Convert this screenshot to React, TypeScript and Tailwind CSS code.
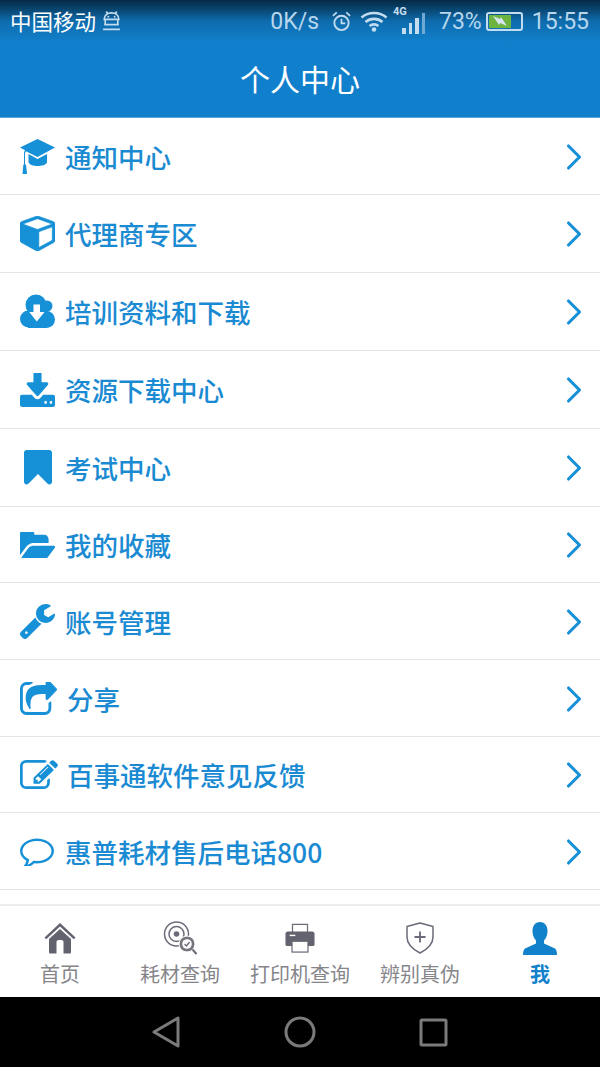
import React from 'react';
import { ChevronRight } from 'lucide-react';

const cjk = { fontFamily: '"Noto Sans CJK SC", sans-serif' };

// font-awesome 4 glyph outlines
const paths = {
  cube: 'M896 1629l640-349v-636l-640 233v752zm-64-864l698-254-698-254-698 254zm832-252v768q0 35-18 65t-50 47l-704 384q-28 16-61 16t-61-16l-704-384q-32-17-50-47t-18-65v-768q0-40 23-73t61-49l704-256q22-8 44-8t44 8l704 256q38 16 61 49t23 73z',
  download: 'M1344 1344q0-26-19-45t-45-19-45 19-19 45 19 45 45 19 45-19 19-45zm256 0q0-26-19-45t-45-19-45 19-19 45 19 45 45 19 45-19 19-45zm128-224v320q0 40-28 68t-68 28h-1472q-40 0-68-28t-28-68v-320q0-40 28-68t68-28h465l135 136q58 56 136 56t136-56l136-136h464q40 0 68 28t28 68zm-325-569q17 41-14 70l-448 448q-18 19-45 19t-45-19l-448-448q-31-29-14-70 17-39 59-39h256v-448q0-26 19-45t45-19h256q26 0 45 19t19 45v448h256q42 0 59 39z',
  bookmark: 'M1420 128q23 0 44 9 33 13 52.500 41t19.500 62v1289q0 34-19.500 62t-52.500 41q-19 8-44 8-48 0-83-32l-441-424-441 424q-36 33-83 33-23 0-44-9-33-13-52.500-41t-19.500-62v-1289q0-34 19.500-62t52.500-41q21-9 44-9h1048z',
  folder: 'M1879 952q0 31-31 66l-336 396q-43 51-120.500 86.500t-143.500 35.500h-1088q-34 0-60.500-13t-26.500-43q0-31 31-66l336-396q43-51 120.500-86.500t143.500-35.500h1088q34 0 60.500 13t26.500 43zm-343-344v160h-832q-94 0-197 47.500t-164 119.500l-337 396-5 6q0-4-.5-12.500t-.5-12.500v-960q0-92 66-158t158-66h320q92 0 158 66t66 158v32h544q92 0 158 66t66 158z',
  wrench: 'M448 1472q0-26-19-45t-45-19-45 19-19 45 19 45 45 19 45-19 19-45zm644-420l-682 682q-37 37-90 37-52 0-91-37l-106-108q-38-36-38-90 0-53 38-91l681-681q39 98 114.500 173.500t173.500 114.500zm634-435q0 39-23 106-47 134-164.500 217.500t-258.500 83.500q-185 0-316.500-131.500t-131.500-316.500 131.500-316.500 316.500-131.500q58 0 121.500 16.500t107.500 46.500q16 11 16 28t-16 28l-293 169v224l193 106q5-3 79-48.500t135.500-81 70.500-35.500q15 0 23.500 10t8.500 25z',
  share: 'M1472 989v259q0 119-84.500 203.500t-203.500 84.500h-832q-119 0-203.500-84.500t-84.500-203.500v-832q0-119 84.500-203.500t203.500-84.500h255q13 0 22.500 9.500t9.500 22.500q0 27-26 32-77 26-133 60-10 4-16 4h-112q-66 0-113 47t-47 113v832q0 66 47 113t113 47h832q66 0 113-47t47-113v-214q0-19 18-29 28-13 54-37 16-16 35-8 21 9 21 29zm237-496l-384 384q-18 19-45 19-12 0-25-5-39-17-39-59v-192h-160q-323 0-438 131-119 137-74 473 3 23-20 34-8 2-12 2-16 0-26-13-10-14-21-31t-39.500-68.500-49.500-99.500-38.500-114-17.500-122q0-49 3.500-91t14-90 28-88 47-81.500 68.500-74 94.500-61.500 124.500-48.500 159.500-30.500 196.500-11h160v-192q0-42 39-59 13-5 25-5 26 0 45 19l384 384q19 19 19 45t-19 45z',
  edit: 'M888 1184l116-116-152-152-116 116v56h96v96h56zm440-720q-16-16-33 1l-350 350q-17 17-1 33t33-1l350-350q17-17 1-33zm80 594v190q0 119-84.500 203.500t-203.500 84.500h-832q-119 0-203.500-84.500t-84.500-203.500v-832q0-119 84.500-203.500t203.500-84.500h832q63 0 117 25 15 7 18 23 3 17-9 29l-49 49q-14 14-32 8-23-6-45-6h-832q-66 0-113 47t-47 113v832q0 66 47 113t113 47h832q66 0 113-47t47-113v-126q0-13 9-22l64-64q15-15 35-7t20 29zm-96-738l288 288-672 672h-288v-288zm444 132l-92 92-288-288 92-92q28-28 68-28t68 28l152 152q28 28 28 68t-28 68z',
  comment: 'M896 384q-204 0-381.500 69.500t-282 187.500-104.500 255q0 112 71.500 213.500t201.500 175.500l87 50-27 96q-24 91-70 172 152-63 275-171l43-38 57 6q69 8 130 8 204 0 381.500-69.500t282-187.500 104.500-255-104.500-255-282-187.500-381.500-69.500zm896 512q0 174-120 321.500t-326 233-450 85.500q-70 0-145-8-198 175-460 242-49 14-114 22h-5q-15 0-27-10.500t-16-27.500v-1q-3-4-.5-12t2-10 4.500-9.500l6-9 7-8.500 8-9q7-8 31-34.500t34.500-38 31-39.500 32.500-51 27-59 26-76q-157-89-247.500-220t-90.500-281q0-174 120-321.500t326-233 450-85.500 450 85.500 326 233 120 321.500z',
};

function Glyph({ d, box, className, bold }: { d: string; box: string; className: string; bold?: boolean }) {
  return (
    <svg viewBox={box} className={`shrink-0 ${className}`} fill="currentColor" preserveAspectRatio="none">
      <path d={d} stroke={bold ? 'currentColor' : 'none'} strokeWidth={bold ? 30 : 0} />
    </svg>
  );
}

function Cap() {
  return (
    <svg viewBox="0 0 35 35" className="w-[35px] h-[35px] shrink-0" fill="currentColor">
      <path d="M17.500 0L35 8.500L17.500 18L6 12.300C5.300 13 5 14 5 15V25C5.800 25.500 6.200 26.200 6.200 27L7 35H2.500L3.200 27C3.200 26.200 3.500 25.500 4 25V14.500C4 13.300 4.300 12 5 11.300L0 8.500Z" />
      <path d="M8.500 15L17.500 20L27 15V23.500C25 28 11 28.500 8.500 23.500Z" />
    </svg>
  );
}

function Cloud() {
  return (
    <svg viewBox="0 0 35 35" className="w-[35px] h-[35px] shrink-0">
      <g fill="currentColor">
        <circle cx="16" cy="11" r="10.500" />
        <circle cx="27" cy="12" r="5.500" />
        <circle cx="8.500" cy="25" r="8.500" />
        <circle cx="26.500" cy="25.500" r="8.500" />
        <rect x="8" y="15" width="19" height="19" />
      </g>
      <path d="M13.500 10.500H20V18H24.500L16.800 27.500L9.200 18H13.500Z" fill="#fff" />
    </svg>
  );
}

const rows = [
  { label: '通知中心', h: 'h-[77px]', icon: <Cap />, gap: 'ml-[10px]' },
  { label: '代理商专区', h: 'h-[78px]', icon: <Glyph d={paths.cube} box="0 127 1664 1666" className="w-[35px] h-[35px]" bold />, gap: 'ml-[10px]' },
  { label: '培训资料和下载', h: 'h-[78px]', icon: <Cloud />, gap: 'ml-[10px]' },
  { label: '资源下载中心', h: 'h-[78px]', icon: <Glyph d={paths.download} box="64 128 1664 1408" className="w-[35px] h-[34px]" />, gap: 'ml-[10px]' },
  { label: '考试中心', h: 'h-[78px]', icon: <Glyph d={paths.bookmark} box="256 128 1280 1536" className="w-[28px] h-[35px] ml-[4px]" />, gap: 'ml-[10px]' },
  { label: '我的收藏', h: 'h-[76px]', icon: <Glyph d={paths.folder} box="0 256 1879 1216" className="w-[35px] h-[26px]" />, gap: 'ml-[10px]' },
  { label: '账号管理', h: 'h-[77px]', icon: <Glyph d={paths.wrench} box="85 128 1641 1643" className="w-[35px] h-[35px]" />, gap: 'ml-[10px]' },
  { label: '分享', h: 'h-[77px]', icon: <Glyph d={paths.share} box="64 128 1664 1408" className="w-[37px] h-[33px]" />, gap: 'ml-[12px]' },
  { label: '百事通软件意见反馈', h: 'h-[76px]', icon: <Glyph d={paths.edit} box="0 128 1792 1408" className="w-[38px] h-[29px]" />, gap: 'ml-[12px]' },
  { label: '惠普耗材售后电话800', h: 'h-[77px]', icon: <Glyph d={paths.comment} box="0 128 1792 1536" className="w-[34px] h-[30px]" />, gap: 'ml-[10px]' },
];

function HomeIcon() {
  return (
    <svg viewBox="0 0 32 31" className="w-[32px] h-[31px]" fill="#63626f">
      <path d="M16 0L31.500 14.500L29.800 16.300L16 3.500L2.200 16.300L0.500 14.500Z" />
      <path fillRule="evenodd" d="M16 6L27 16V29C27 30 26.500 30.500 25.500 30.500H6.500C5.500 30.500 5 30 5 29V16ZM12.500 19V30.500H19.500V19C19.500 17.500 18.500 17 16 17C13.500 17 12.500 17.500 12.500 19Z" />
    </svg>
  );
}

function TargetIcon() {
  return (
    <svg viewBox="0 0 34 34" className="w-[34px] h-[34px]" fill="none" stroke="#6b6a78" strokeWidth="1.500">
      <circle cx="13.500" cy="13" r="12" />
      <circle cx="13.500" cy="13" r="7.500" />
      <circle cx="13.500" cy="13" r="2.800" fill="#6b6a78" stroke="none" />
      <circle cx="24" cy="23" r="8" fill="#77767f" stroke="#fff" strokeWidth="1" />
      <circle cx="24" cy="23" r="4.800" fill="#fff" stroke="none" />
      <path d="M21.500 23L23.500 25L26.500 21" strokeWidth="1.300" />
      <path d="M29.500 28.500L33.500 33" strokeWidth="2" />
    </svg>
  );
}

function PrinterIcon() {
  return (
    <svg viewBox="0 0 32 32" className="w-[30px] h-[32px]">
      <path d="M8 10V1.500H24V10" fill="#fff" stroke="#6b6a78" strokeWidth="1.300" />
      <path d="M3 9H29C30.500 9 31.500 10 31.500 11.500V23C31.500 24 31 24.500 30 24.500H2C1 24.500 0.500 24 0.500 23V11.500C0.500 10 1.500 9 3 9Z" fill="#63626f" />
      <rect x="7.500" y="19.500" width="17" height="11.500" fill="#fff" stroke="#6b6a78" strokeWidth="1.300" />
      <rect x="5" y="12.500" width="6" height="1.500" fill="#fff" />
    </svg>
  );
}

function ShieldIcon() {
  return (
    <svg viewBox="0 0 28 32" className="w-[28px] h-[32px]" fill="none" stroke="#6b6a78" strokeWidth="1.500">
      <path d="M14 1L27 4.500V15C27 22 21 27.500 14 31C7 27.500 1 22 1 15V4.500Z" strokeLinejoin="round" />
      <path d="M14 9.500V20.500M8.500 15H19.500" strokeWidth="1.800" />
    </svg>
  );
}

function PersonIcon() {
  return (
    <svg viewBox="0 0 34 33" className="w-[34px] h-[33px]" fill="#1281cc">
      <path d="M17 0C12 0 9.500 4 9.500 9C9.500 13 11 16.500 13 18.500V21.500L2 26.500C0.500 27.500 0 30.500 0 33H34C34 30.500 33.500 27.500 32 26.500L21 21.500V18.500C23 16.500 24.500 13 24.500 9C24.500 4 22 0 17 0Z" />
    </svg>
  );
}

function Tab({ label, icon, active }: { label: string; icon: React.ReactNode; active?: boolean }) {
  return (
    <div className="flex-1 flex flex-col items-center">
      <div className="h-[36px] flex items-center justify-center">{icon}</div>
      <span className={`mt-[5px] text-[20px] leading-[26px] ${active ? 'text-[#1281cc] font-bold' : 'text-[#85858a]'}`}>
        {label}
      </span>
    </div>
  );
}

export default function App() {
  return (
    <div className="w-[600px] h-[1067px] flex flex-col bg-white overflow-hidden" style={cjk}>
      <div className="h-[118px] shrink-0 bg-[#1180cc] flex flex-col border-b border-[#5aa7dc]">
        <div className="h-[42px] flex items-center justify-between pl-[10px] pr-[11px] bg-gradient-to-b from-[#052a44] via-[#0e6bac] to-[#1180cc]">
          <div className="flex items-center gap-[5px]">
            <span className="text-white text-[21.500px] leading-none">中国移动</span>
            <svg viewBox="0 0 20 19" className="w-[21px] h-[20px]" fill="none" stroke="#c3dcef" strokeWidth="1.600">
              <path d="M3 8C3 4 6 1.800 10 1.800C14 1.800 17 4 17 8ZM3 13H17M4 8V13M16 8V13M2 17.500H18M5 0.500L6.500 3M15 0.500L13.500 3" />
              <circle cx="7" cy="5.500" r="0.900" fill="#c3dcef" stroke="none" />
              <circle cx="13" cy="5.500" r="0.900" fill="#c3dcef" stroke="none" />
            </svg>
          </div>
          <div className="flex items-center text-[#b8d6ec] text-[23px] leading-none" style={{ fontFamily: 'Roboto, sans-serif' }}>
            <span>0K/s</span>
            <svg viewBox="0 0 22 22" className="w-[21px] h-[21px] ml-[12px]" fill="none" stroke="#c3dcef" strokeWidth="2">
              <circle cx="11" cy="12.500" r="7.500" />
              <path d="M11 8V13H15M2 5L6 1.500M20 5L16 1.500" strokeWidth="1.800" />
            </svg>
            <svg viewBox="0 0 28 22" className="w-[28px] h-[22px] ml-[8px]" fill="none" stroke="#c3dcef" strokeWidth="2.600">
              <path d="M1.500 7.500C8.500 1.500 19.500 1.500 26.500 7.500M5.500 12C10.500 7.800 17.500 7.800 22.500 12M9.500 16C12.500 13.800 15.500 13.800 18.500 16" />
              <circle cx="14" cy="19.500" r="2.300" fill="#c3dcef" stroke="none" />
            </svg>
            <div className="relative w-[32px] h-[26px] ml-[5px] flex items-end gap-[3px] pl-[9px]">
              <span className="absolute left-[0px] top-[-2px] text-[11px] font-bold leading-none text-[#c3dcef]">4G</span>
              <span className="w-[4px] h-[6px] bg-[#c3dcef]" />
              <span className="w-[4px] h-[11px] bg-[#c3dcef]" />
              <span className="w-[4px] h-[16px] bg-[#c3dcef]" />
              <span className="w-[4px] h-[21px] bg-[#6fa9d4]" />
            </div>
            <span className="ml-[14px]">73%</span>
            <div className="ml-[4px] w-[37px] h-[19px] border-2 border-[#c3dcef] rounded-[3px] p-[1px] flex">
              <div className="w-[72%] bg-[#6db33f] flex items-center justify-center">
                <svg viewBox="0 0 16 12" className="w-[16px] h-[12px]" fill="#d8e4ef">
                  <path d="M1 1L8 4L9 2L15 11L8 8L7 10Z" />
                </svg>
              </div>
            </div>
            <span className="ml-[9px]">15:55</span>
          </div>
        </div>
        <div className="flex-1 flex items-center justify-center text-white text-[30px] leading-none pb-[4px]">个人中心</div>
      </div>

      <div className="flex-1 flex flex-col bg-white">
        {rows.map((r) => (
          <div key={r.label} className={`${r.h} shrink-0 flex items-center pl-[20px] border-b border-[#e4e4e4] text-[#1690d6]`}>
            <div className="w-[35px] flex justify-start">{r.icon}</div>
            <span className={`${r.gap} flex-1 pt-[2px] text-[26.500px] leading-none font-medium text-[#1a8ad2]`}>{r.label}</span>
            <ChevronRight className="w-[44px] h-[44px] mr-[4px] mt-[1px]" strokeWidth={1.700} />
          </div>
        ))}
      </div>

      <div className="h-[93px] shrink-0 flex bg-white border-t-2 border-[#ececec] pt-[14px]">
        <Tab label="首页" icon={<HomeIcon />} />
        <Tab label="耗材查询" icon={<TargetIcon />} />
        <Tab label="打印机查询" icon={<PrinterIcon />} />
        <Tab label="辨别真伪" icon={<ShieldIcon />} />
        <Tab label="我" active icon={<PersonIcon />} />
      </div>

      <div className="h-[70px] shrink-0 bg-black flex items-center justify-center">
        <svg viewBox="0 0 300 40" className="w-[300px] h-[40px]" fill="none" stroke="#7b7b7b" strokeWidth="3" strokeLinejoin="round">
          <path d="M28 6V34L4 20Z" />
          <circle cx="150" cy="20" r="14" />
          <rect x="271" y="8" width="25" height="25" rx="1" />
        </svg>
      </div>
    </div>
  );
}
